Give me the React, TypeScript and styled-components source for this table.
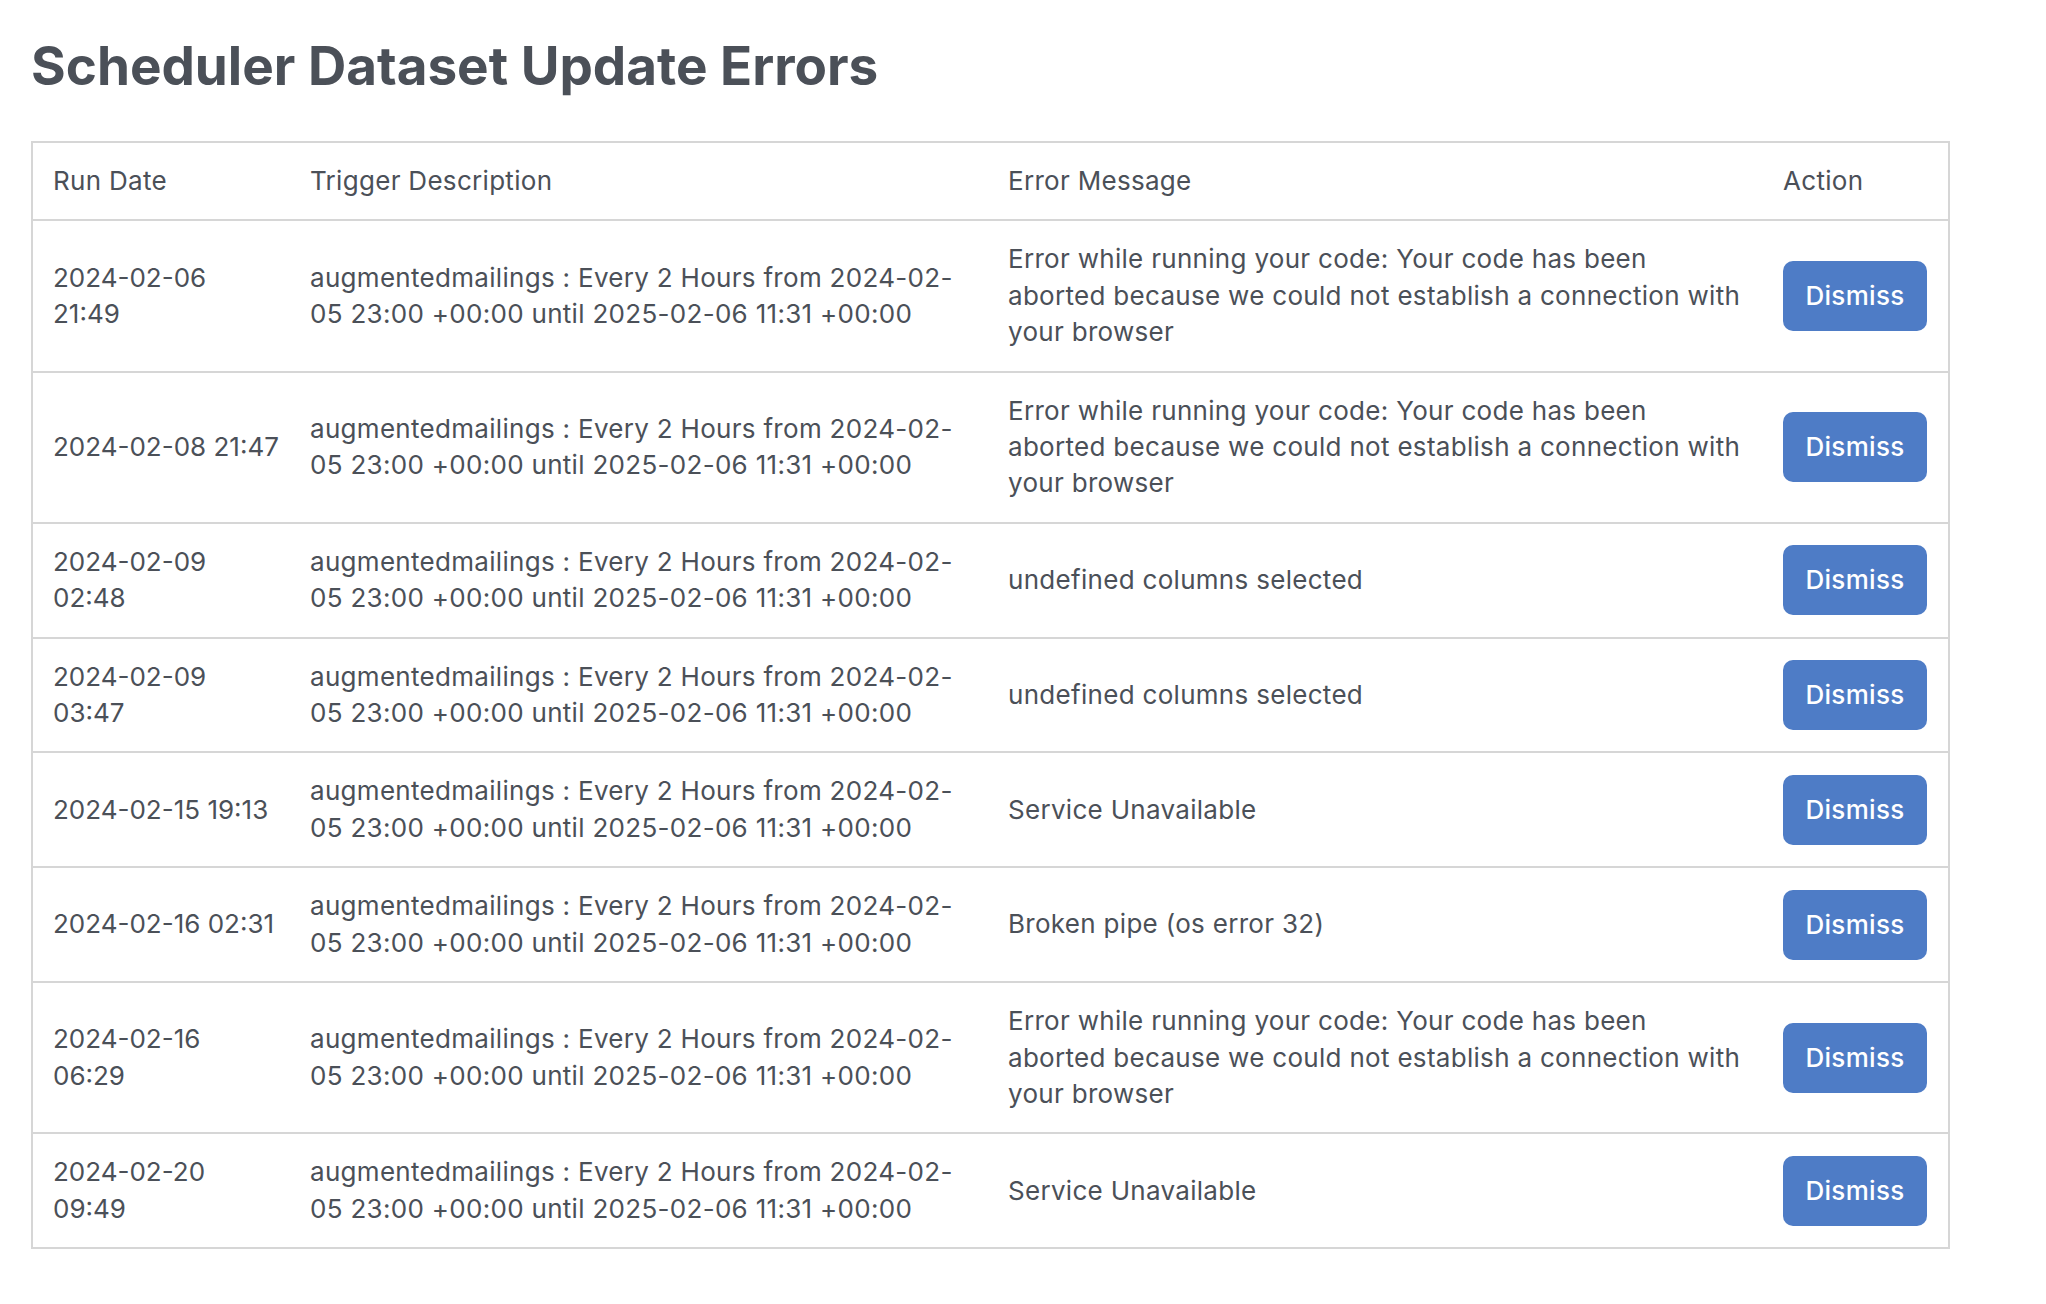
import React from "react";
import styled, { createGlobalStyle } from "styled-components";

const GlobalStyle = createGlobalStyle`
  html, body {
    margin: 0;
    padding: 0;
    background: #ffffff;
  }
  body {
    font-family: Inter, "Noto Sans", "Liberation Sans", sans-serif;
    color: #4b5058;
  }
`;

const Page = styled.main`
  width: 1918px;
  padding: 34px 0 40px 31px;
`;

const Title = styled.h1`
  margin: 0 0 43px 0;
  font-size: 53px;
  line-height: 64px;
  font-weight: 700;
  color: #4b5058;
`;

const Table = styled.table`
  width: 1915px;
  table-layout: fixed;
  border-collapse: collapse;
  border: 2px solid #d6d6d6;
  font-size: 26px;
  line-height: 36.4px;
  letter-spacing: 0.3px;
  color: #4b5058;
`;

const HeadCell = styled.th<{ $w: number }>`
  width: ${(p) => p.$w}px;
  text-align: left;
  font-weight: 400;
  padding: 20px 20px;
  vertical-align: middle;
`;

const Row = styled.tr`
  border-top: 2px solid #d6d6d6;
`;

const Cell = styled.td<{ $nowrap?: boolean }>`
  padding: 20px 20px;
  vertical-align: middle;
  text-align: left;
  white-space: ${(p) => (p.$nowrap ? "nowrap" : "normal")};
  letter-spacing: ${(p) => (p.$nowrap ? "0" : "0.3px")};
`;

const DismissButton = styled.button`
  display: inline-flex;
  align-items: center;
  justify-content: center;
  width: 144px;
  height: 70px;
  padding: 0;
  border: none;
  border-radius: 10px;
  background: #4e7cc6;
  color: #ffffff;
  font-family: inherit;
  font-size: 26px;
  font-weight: 500;
  line-height: 36px;
  letter-spacing: 0.3px;
  cursor: pointer;
`;

type ErrorRow = {
  date: string;
  time: string;
  wrapDate: boolean;
  trigger: string;
  message: string;
};

const TRIGGER =
  "augmentedmailings : Every 2 Hours from 2024-02-05 23:00 +00:00 until 2025-02-06 11:31 +00:00";
const ABORTED =
  "Error while running your code: Your code has been aborted because we could not establish a connection with your browser";

const rows: ErrorRow[] = [
  { date: "2024-02-06", time: "21:49", wrapDate: true, trigger: TRIGGER, message: ABORTED },
  { date: "2024-02-08", time: "21:47", wrapDate: false, trigger: TRIGGER, message: ABORTED },
  { date: "2024-02-09", time: "02:48", wrapDate: true, trigger: TRIGGER, message: "undefined columns selected" },
  { date: "2024-02-09", time: "03:47", wrapDate: true, trigger: TRIGGER, message: "undefined columns selected" },
  { date: "2024-02-15", time: "19:13", wrapDate: false, trigger: TRIGGER, message: "Service Unavailable" },
  { date: "2024-02-16", time: "02:31", wrapDate: false, trigger: TRIGGER, message: "Broken pipe (os error 32)" },
  { date: "2024-02-16", time: "06:29", wrapDate: true, trigger: TRIGGER, message: ABORTED },
  { date: "2024-02-20", time: "09:49", wrapDate: true, trigger: TRIGGER, message: "Service Unavailable" },
];

export default function App() {
  return (
    <>
      <GlobalStyle />
      <Page>
        <Title>Scheduler Dataset Update Errors</Title>
        <Table>
          <thead>
            <tr>
              <HeadCell $w={217}>Run Date</HeadCell>
              <HeadCell $w={658}>Trigger Description</HeadCell>
              <HeadCell $w={735}>Error Message</HeadCell>
              <HeadCell $w={145}>Action</HeadCell>
            </tr>
          </thead>
          <tbody>
            {rows.map((r, i) => (
              <Row key={i}>
                <Cell $nowrap>
                  {r.date}
                  {r.wrapDate ? <br /> : " "}
                  {r.time}
                </Cell>
                <Cell>{r.trigger}</Cell>
                <Cell>{r.message}</Cell>
                <Cell>
                  <DismissButton type="button">Dismiss</DismissButton>
                </Cell>
              </Row>
            ))}
          </tbody>
        </Table>
      </Page>
    </>
  );
}
